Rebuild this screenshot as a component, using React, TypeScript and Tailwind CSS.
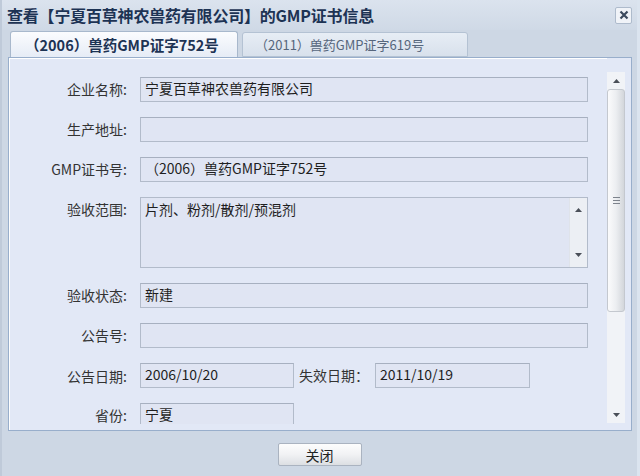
import React from "react"

const UpArrow = () => (
    <svg width="7" height="4" viewBox="0 0 7 4"><path d="M0 4 L3.5 0 L7 4 Z" fill="#4a4f58" /></svg>
)
const DownArrow = () => (
    <svg width="7" height="4" viewBox="0 0 7 4"><path d="M0 0 L3.5 4 L7 0 Z" fill="#4a4f58" /></svg>
)

function Label({ text }: { text: string }) {
    return (
        <div className="w-[130px] shrink-0 pr-[13px] text-right text-[14px] text-[#333] leading-[24px]">
            {text}
        </div>
    )
}

function Field({ value, w = "w-[448px]" }: { value?: string; w?: string }) {
    return (
        <div className={`${w} h-[25px] shrink-0 border border-[#b2bbca] border-t-[#a7b0c0] bg-[#e0e5f3] pl-[4px] text-[14px] text-[#1f1f1f] leading-[20px]`}>
            {value}
        </div>
    )
}

export default function App() {
    return (
        <div className="w-[640px] h-[476px] bg-[#cdd7e4] flex flex-col overflow-hidden font-['Noto_Sans_CJK_SC','Noto_Sans',sans-serif] border-l-2 border-r-[3px] border-l-[#bfcad9] border-r-[#dbe4ef]">
            {/* Title bar */}
            <div className="h-[30px] shrink-0 flex items-center justify-between pl-[5px] pr-[5px] bg-gradient-to-b from-[#dbe3ee] to-[#cfd9e6]">
                <span className="text-[16px] font-bold text-[#1d3354] tracking-[-0.2px]">
                    查看【宁夏百草神农兽药有限公司】的GMP证书信息
                </span>
                <div className="w-[17px] h-[17px] rounded-[2px] border border-[#aebbcc] bg-[#f0f3f8] flex items-center justify-center">
                    <svg width="10" height="10" viewBox="0 0 10 10">
                        <path d="M1.5 1.5 L8.5 8.5 M8.5 1.5 L1.5 8.5" stroke="#3c4a5e" strokeWidth="2.2" />
                    </svg>
                </div>
            </div>

            {/* Tabs */}
            <div className="h-[27px] shrink-0 flex items-end pl-[8px] gap-[4px]">
                <div className="w-[228px] h-[26px] flex items-center pl-[14px] rounded-t-[3px] border border-b-0 border-[#a8b8cc] bg-gradient-to-b from-[#fbfcfe] to-[#e6ecf6] text-[14.5px] font-bold text-[#1d3354]">
                    （2006）兽药GMP证字752号
                </div>
                <div className="w-[226px] h-[25px] flex items-center pl-[12px] rounded-t-[3px] border border-[#b4c2d3] bg-gradient-to-b from-[#e7edf5] to-[#d8e1ec] text-[13px] text-[#56667c]">
                    （2011）兽药GMP证字619号
                </div>
            </div>

            {/* Panel */}
            <div className="ml-[6px] w-[624px] h-[374px] shrink-0 border border-[#98aecb] bg-[#e2e8f6] flex">
                <div className="flex-1 h-full overflow-hidden border-t border-l border-white pt-[18px] pb-[6px]">
                    <div className="h-full overflow-hidden flex flex-col gap-[15px]">
                        <div className="flex shrink-0"><Label text="企业名称:" /><Field value="宁夏百草神农兽药有限公司" /></div>
                        <div className="flex shrink-0"><Label text="生产地址:" /><Field /></div>
                        <div className="flex shrink-0"><Label text="GMP证书号:" /><Field value="（2006）兽药GMP证字752号" /></div>
                        <div className="flex shrink-0">
                            <Label text="验收范围:" />
                            <div className="w-[448px] h-[71px] shrink-0 border border-[#b2bbca] bg-[#e0e5f3] flex">
                                <div className="flex-1 pl-[4px] text-[14px] text-[#1f1f1f] leading-[22px]">
                                    片剂、粉剂/散剂/预混剂
                                </div>
                                <div className="w-[18px] h-full bg-[#eceff4] border-l border-[#dfe3ea] flex flex-col items-center justify-between pt-[10px] pb-[10px]">
                                    <UpArrow />
                                    <DownArrow />
                                </div>
                            </div>
                        </div>
                        <div className="flex shrink-0"><Label text="验收状态:" /><Field value="新建" /></div>
                        <div className="flex shrink-0"><Label text="公告号:" /><Field /></div>
                        <div className="flex shrink-0 items-center">
                            <Label text="公告日期:" />
                            <Field value="2006/10/20" w="w-[154px]" />
                            <div className="w-[81px] shrink-0 pl-[5px] text-[14px] text-[#333]">失效日期：</div>
                            <Field value="2011/10/19" w="w-[155px]" />
                        </div>
                        <div className="flex shrink-0"><Label text="省份:" /><Field value="宁夏" w="w-[154px]" /></div>
                    </div>
                </div>

                {/* Vertical scrollbar */}
                <div className="w-[18px] shrink-0 mt-[14px] mb-[7px] mr-[6px] bg-[#f1f3f7] flex flex-col">
                    <div className="h-[17px] flex items-center justify-center"><UpArrow /></div>
                    <div className="h-[223px] rounded-[3px] border border-[#c4c8cf] bg-gradient-to-r from-[#fbfbfc] via-[#eceef1] to-[#d3d6db] flex items-center justify-center">
                        <div className="flex flex-col gap-[2px]">
                            <div className="w-[7px] h-px bg-[#7d838c]" />
                            <div className="w-[7px] h-px bg-[#7d838c]" />
                            <div className="w-[7px] h-px bg-[#7d838c]" />
                        </div>
                    </div>
                    <div className="flex-1" />
                    <div className="h-[17px] flex items-center justify-center"><DownArrow /></div>
                </div>
            </div>

            {/* Footer */}
            <div className="flex-1 flex justify-center pt-[12px]">
                <button className="w-[84px] h-[23px] border border-[#aab3c0] rounded-[2px] bg-gradient-to-b from-[#fdfdfd] via-[#f1f2f4] to-[#dcdfe3] text-[14px] text-[#222] leading-none">
                    关闭
                </button>
            </div>
        </div>
    )
}
